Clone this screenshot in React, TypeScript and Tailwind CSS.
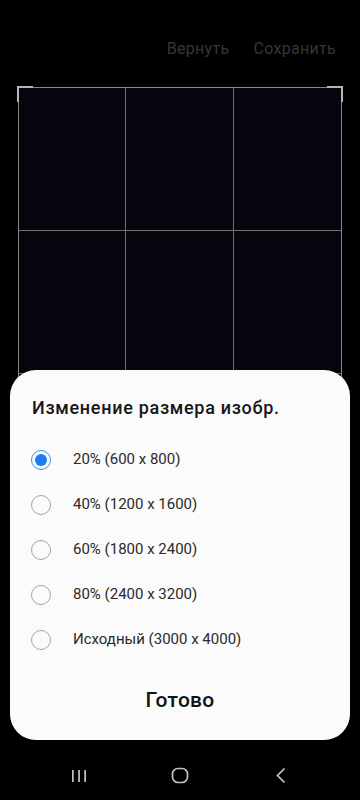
import React from "react";

const options = [
  { id: "20", label: "20% (600 x 800)" },
  { id: "40", label: "40% (1200 x 1600)" },
  { id: "60", label: "60% (1800 x 2400)" },
  { id: "80", label: "80% (2400 x 3200)" },
  { id: "orig", label: "Исходный (3000 x 4000)" },
];

function Radio({ checked }: { checked: boolean }) {
  if (checked) {
    return (
      <span className="flex h-[20px] w-[20px] items-center justify-center rounded-full border-[1.5px] border-[#3e8ef7]">
        <span className="h-[12px] w-[12px] rounded-full bg-[#1a7cf5]" />
      </span>
    );
  }
  return <span className="h-[20px] w-[20px] rounded-full border border-[#a3a3a3]" />;
}

export default function App() {
  const selected = "20";
  return (
    <div
      className="relative flex h-[800px] w-[360px] flex-col overflow-hidden bg-black"
      style={{ fontFamily: "Roboto, 'Noto Sans', sans-serif" }}
    >
      {/* Top actions */}
      <div className="flex h-[60px] items-end justify-end gap-[24px] pb-[1px] pr-[24px]">
        <span className="text-[16px] leading-[20px] tracking-[0.3px] text-[#363636]">Вернуть</span>
        <span className="text-[16px] leading-[20px] tracking-[0.3px] text-[#363636]">Сохранить</span>
      </div>

      {/* Crop frame */}
      <div className="relative ml-[18px] mt-[27px] h-[431px] w-[324px] border border-[#8a8a8a] bg-[#06050d]">
        <div className="grid h-full w-full grid-cols-3 grid-rows-3">
          {Array.from({ length: 9 }).map((_, i) => (
            <div
              key={i}
              className={
                (i % 3 !== 2 ? "border-r border-[#707070] " : "") +
                (i < 6 ? "border-b border-[#707070]" : "")
              }
            />
          ))}
        </div>
        {/* corner handles */}
        <span className="absolute -left-[2px] -top-[2px] h-[16px] w-[2px] bg-[#b5b5b5]" />
        <span className="absolute -left-[2px] -top-[2px] h-[2px] w-[16px] bg-[#b5b5b5]" />
        <span className="absolute -right-[2px] -top-[2px] h-[16px] w-[2px] bg-[#b5b5b5]" />
        <span className="absolute -right-[2px] -top-[2px] h-[2px] w-[16px] bg-[#b5b5b5]" />
      </div>

      {/* Navigation bar */}
      <div className="mt-auto flex h-[48px] items-center pb-[1px] pl-[28px]">
        <div className="flex w-[101px] justify-center">
          <svg width="16" height="14" viewBox="0 0 16 14">
            <rect x="1" y="1" width="1.7" height="12" fill="#c4c4c4" />
            <rect x="7.2" y="1" width="1.7" height="12" fill="#c4c4c4" />
            <rect x="13.3" y="1" width="1.7" height="12" fill="#c4c4c4" />
          </svg>
        </div>
        <div className="flex w-[101px] justify-center">
          <svg width="18" height="17" viewBox="0 0 18 17">
            <rect x="1.5" y="1.5" width="15" height="14" rx="5.5" fill="none" stroke="#c4c4c4" strokeWidth="1.7" />
          </svg>
        </div>
        <div className="flex w-[101px] justify-center">
          <svg width="14" height="17" viewBox="0 0 14 17">
            <path d="M10.5 1.5 L3.5 8.5 L10.5 15.5" fill="none" stroke="#c4c4c4" strokeWidth="1.7" />
          </svg>
        </div>
      </div>

      {/* Resize sheet */}
      <div className="absolute left-[10px] right-[10px] top-[370px] flex h-[370px] flex-col rounded-[26px] bg-[#fbfbfb]">
        <h2 className="px-[22px] pt-[26px] text-[18px] font-medium leading-[24px] tracking-[0.7px] text-[#161616]">
          Изменение размера изобр.
        </h2>
        <div className="mt-[17px] flex flex-col">
          {options.map((o) => (
            <div key={o.id} className="flex h-[45px] items-center pl-[21px]">
              <Radio checked={o.id === selected} />
              <span className="ml-[22px] text-[15px] text-[#2a2a2a]">{o.label}</span>
            </div>
          ))}
        </div>
        <div className="mt-auto flex h-[52px] items-start justify-center">
          <span className="text-[21px] font-medium leading-[24px] tracking-[0.3px] text-[#111]">Готово</span>
        </div>
      </div>
    </div>
  );
}
